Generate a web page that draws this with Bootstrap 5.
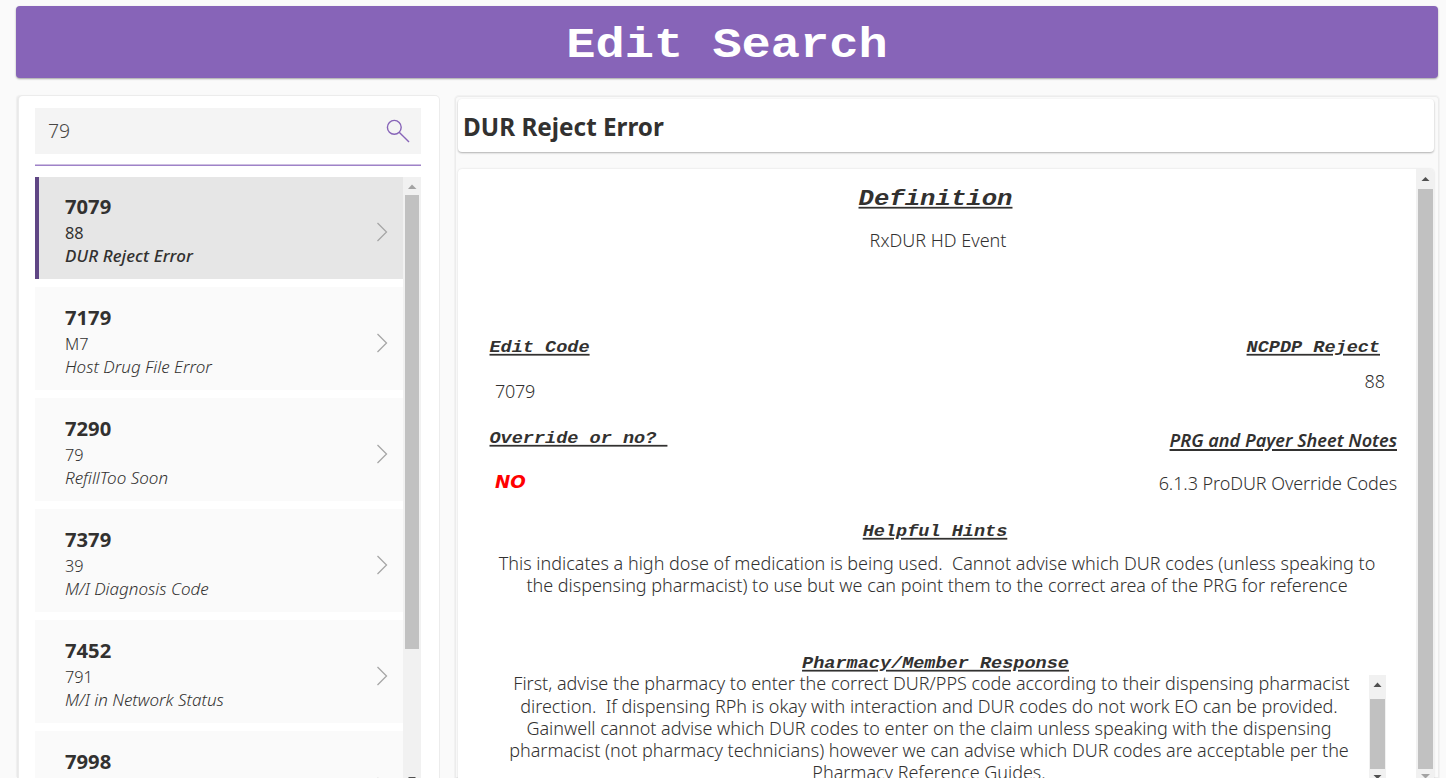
<!DOCTYPE html>
<html lang="en">
<head>
<meta charset="utf-8">
<title>Edit Search</title>
<link href="https://cdn.jsdelivr.net/npm/bootstrap@5.3.0/dist/css/bootstrap.min.css" rel="stylesheet">
<style>
body{height:100vh;overflow:hidden;background:#fafafa;color:#323130;font-family:"Noto Sans","Open Sans",sans-serif;font-size:18px;font-weight:350;padding:6px 8px 0 16px}
.app-title{height:72px;background:#8764b8;border-radius:4px;box-shadow:0 1px 2px rgba(0,0,0,.35);font:bold 48.7px/72px "Liberation Mono",monospace}
.app-title span{display:inline-block;transform:translateY(2px) scaleY(.88);transform-origin:50% 68%}
.panes{margin-top:18px;height:682px}
.side{width:420px;margin-left:2.5px;background:#fff;border-radius:4px 4px 0 0;box-shadow:0 0 0 1px #ececec,-2px 0 0 #e9e9e9,-3px -1px 1px #efefef;padding:11.500px 17.5px 0 16.500px}
.finder{height:46.500px;background:#f4f4f4;padding:0 11px 0 13px;font-size:19.4px;color:#484644}
.rule{height:2px;background:linear-gradient(#cdbfe0 50%,#9f82c9 50%);margin:10px 0 11px}
.rows{height:602px;overflow:hidden}
.item{height:103px;margin-bottom:8px;background:#fafafa;padding:17px 15px 0 30px}
.item.on{height:102px;background:#e6e6e6;border-left:4.500px solid #5f4684;padding:16px 15px 0 26px;font-weight:400}
.item.on em{font-weight:500;letter-spacing:.08px}
.code{font-size:20.2px;line-height:26px;font-weight:700}
.rej{font-size:16.3px;line-height:23px;margin-top:2.5px}
.item em{display:block;font-size:17px;line-height:22px;white-space:pre}
.chev{margin-top:29px}
.bar{background:#f1f1f1;flex:none}
.bar i{display:block;background:#c1c1c1}
.bar svg{display:block}
.main{margin-left:16.5px;width:984px;border-radius:4px 4px 0 0;box-shadow:inset 0 0 0 1px #ececec,0 0 0 1px #f2f2f2;padding:3px 5px 0 3px}
.name-card{height:53px;background:#fff;border-radius:4px;box-shadow:0 1px 2px rgba(0,0,0,.3);padding-left:5px;font-size:24.3px;font-weight:700;line-height:55px}
.detail{height:613px;margin-top:17px;background:#fff;border-radius:4px 4px 0 0;box-shadow:0 0 2px rgba(0,0,0,.15);overflow:hidden}
.hd{font:italic bold 18.55px/22px "Liberation Mono",monospace;text-decoration:underline;text-decoration-thickness:1.7px;text-underline-offset:2px;white-space:pre;transform:translateY(1px) scaleY(.88);transform-origin:50% 72%}
.hd-lg{font-size:25.67px;line-height:30px;text-decoration-thickness:2.2px;text-underline-offset:2px;transform:scaleY(.88)}
.v{line-height:24px}
.fields{margin:84px 19px 0 31px}
.prg{font-style:italic;font-weight:600;font-size:18.1px;text-decoration:underline;text-decoration-thickness:1.5px;text-underline-offset:2px}
.no{font:italic bold 18.3px/24px "DejaVu Sans",sans-serif;color:#f00}
.para{white-space:pre;line-height:22px}
</style>
</head>
<body>
<header class="app-title text-white text-center"><span>Edit Search</span></header>
<div class="panes d-flex">
  <aside class="side flex-shrink-0">
    <div class="finder d-flex align-items-center justify-content-between">
      <span>79</span>
      <svg width="24" height="24" viewBox="0 0 24 24" fill="none" stroke="#8764b8" stroke-width="1.4"><circle cx="8.3" cy="8.3" r="6.9"/><path d="M13.2 13.2 23 23"/></svg>
    </div>
    <div class="rule"></div>
    <div class="d-flex">
      <div class="rows flex-grow-1" id="rows"></div>
      <div class="bar" style="width:18px">
        <svg width="18" height="18"><path d="M5 12 9 7.500l4.500 4.500z" fill="#a3a3a3"/></svg>
        <i style="width:14px;height:454px;margin-left:2px"></i>
        <svg width="18" height="130"><path d="M5 128h8l-4 4z" fill="#505050"/></svg>
      </div>
    </div>
  </aside>
  <main class="main flex-shrink-0">
    <div class="name-card">DUR Reject Error</div>
    <div class="detail d-flex">
      <div class="flex-grow-1">
        <div class="text-center" style="padding:15px 3px 0 0"><span class="hd hd-lg d-block">Definition</span></div>
        <div class="v text-center" style="margin-top:14px;padding-left:2px">RxDUR HD Event</div>
        <div class="fields d-flex justify-content-between">
          <div>
            <div class="hd" style="margin-left:.5px">Edit Code</div>
            <div class="v" style="margin:20.600px 0 24.400px 6px;letter-spacing:-.3px">7079</div>
            <div class="hd" style="margin-left:.5px">Override or no? </div>
            <div class="no" style="margin:20.600px 0 0 6px">NO</div>
          </div>
          <div class="text-end">
            <div class="hd" style="margin-right:17px">NCPDP Reject</div>
            <div class="v" style="margin:10.600px 12px 35px 0">88</div>
            <div class="v prg">PRG and Payer Sheet Notes</div>
            <div class="v" style="margin-top:19.300px;letter-spacing:-.08px">6.1.3 ProDUR Override Codes</div>
          </div>
        </div>
        <div class="hd text-center" style="margin-top:25.500px;padding-right:4px">Helpful Hints</div>
        <div class="para text-center" style="margin-top:9.200px">This indicates a high dose of medication is being used.  Cannot advise which DUR codes (unless speaking to
<span style="letter-spacing:-.02px">the dispensing pharmacist) to use but we can point them to the correct area of the PRG for reference</span></div>
        <div class="hd text-center" style="margin-top:57.400px;padding-right:3px;line-height:20px">Pharmacy/Member Response</div>
        <div class="d-flex">
          <div class="para text-center" style="width:942px;margin-top:-.5px;line-height:22.150px;letter-spacing:-.02px"><span style="padding-left:5px">First, advise the pharmacy to enter the correct DUR/PPS code according to their dispensing pharmacist</span>
direction.  If dispensing RPh is okay with interaction and DUR codes do not work EO can be provided.
Gainwell cannot advise which DUR codes to enter on the claim unless speaking with the dispensing
pharmacist (not pharmacy technicians) however we can advise which DUR codes are acceptable per the
Pharmacy Reference Guides.</div>
          <div class="bar" style="width:17px;height:110px;margin:1.600px 0 0 -31px">
            <svg width="17" height="24"><path d="M4.500 12 8.500 7.500 12.500 12z" fill="#505050"/></svg>
            <i style="width:15px;height:70px;margin-left:1px"></i>
            <svg width="17" height="12"><path d="M4.500 6h8l-4 4z" fill="#505050"/></svg>
          </div>
        </div>
      </div>
      <div class="bar" style="width:18px">
        <svg width="18" height="20"><path d="M5.500 12 9.500 8l4 4z" fill="#505050"/></svg>
        <i style="width:15px;height:580px;margin-left:2px"></i>
        <svg width="18" height="12"><path d="M5 5h9l-4.500 4.500z" fill="#a3a3a3"/></svg>
      </div>
    </div>
  </main>
</div>
<script>
const edits=[["7079","88","DUR Reject Error"],["7179","M7","Host Drug File Error"],["7290","79","RefillToo Soon"],["7379","39","M/I Diagnosis Code"],["7452","791","M/I in Network Status"],["7998","",""]];
document.getElementById("rows").innerHTML=edits.map((e,i)=>`<div class="item d-flex justify-content-between${i?"":" on"}"><div><div class="code">${e[0]}</div><div class="rej">${e[1]}</div><em>${e[2]}</em></div><svg class="chev" width="12" height="20" viewBox="0 0 12 20" fill="none" stroke="#a6a6a6" stroke-width="1.3"><path d="M1.500 1 10.500 10 1.500 19"/></svg></div>`).join("");
</script>
<script src="https://cdn.jsdelivr.net/npm/bootstrap@5.3.0/dist/js/bootstrap.bundle.min.js"></script>
</body>
</html>
